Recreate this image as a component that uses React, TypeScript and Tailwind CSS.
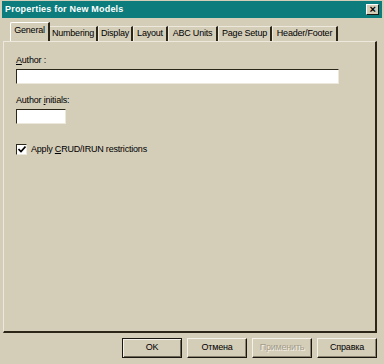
import React from "react";

const font = "font-['Liberation_Sans',Arial,sans-serif]";

const tabs = [
  { label: "General", w: "w-[40px]" },
  { label: "Numbering", w: "w-[49px]" },
  { label: "Display", w: "w-[35px]" },
  { label: "Layout", w: "w-[35px]" },
  { label: "ABC Units", w: "w-[50px]" },
  { label: "Page Setup", w: "w-[54px]" },
  { label: "Header/Footer", w: "w-[66px]" },
];

const Tab = ({ label, w, active }: { label: string; w: string; active?: boolean }) => (
  <div
    className={
      `${w} whitespace-nowrap flex items-center justify-center ` +
      (active
        ? "h-[19px] pb-[2px] border-t border-l border-t-white border-l-white border-r-2 border-r-[#2b2618] rounded-tl-[2px] -mr-[1px] relative z-10 bg-[#d4cdb8]"
        : "h-[15px] mt-[4px] border-t border-l border-t-[#ece8dc] border-l-[#ece8dc] border-r-2 border-r-[#2b2618]")
    }
  >
    {label}
  </div>
);

const Button = ({ label, def, disabled }: { label: string; def?: boolean; disabled?: boolean }) => (
  <button
    className={
      "w-[60px] h-[20px] flex items-center justify-center border " +
      (def
        ? "border-[#1a1710] shadow-[inset_1px_1px_0_#f4f1e8,inset_-1px_-1px_0_#6b6656]"
        : "border-t-[#f4f1e8] border-l-[#f4f1e8] border-r-[#1a1710] border-b-[#1a1710] shadow-[inset_-1px_-1px_0_#8a8470]") +
      (disabled ? " text-[#a29c88] [text-shadow:1px_1px_0_#f4f1e8]" : " text-black")
    }
  >
    {label}
  </button>
);

export default function App() {
  return (
    <div className={`w-[384px] h-[364px] bg-[#d4cdb8] flex flex-col text-[9px] tracking-[-0.2px] text-black ${font}`}>
      {/* Title bar */}
      <div className="mx-[2px] mt-[1px] h-[17px] bg-[#0c7c7c] flex items-center justify-between pl-[3px] pr-[3px]">
        <span className="text-white font-bold text-[9px] tracking-[0.2px]">Properties for New Models</span>
        <div className="w-[13px] h-[11px] bg-[#d4cdb8] border border-t-white border-l-white border-r-[#1a1710] border-b-[#1a1710] flex items-center justify-center text-[11px] font-bold leading-none">
          ×
        </div>
      </div>

      {/* Tabs */}
      <div className="flex pl-[10px] mt-[4px] h-[19px] items-start">
        {tabs.map((t, i) => (
          <Tab key={t.label} label={t.label} w={t.w} active={i === 0} />
        ))}
      </div>

      {/* Panel */}
      <div className="ml-[3px] w-[374px] h-[292px] border-t border-l border-t-[#ece8dc] border-l-[#ece8dc] border-r-2 border-b-2 border-r-[#2b2618] border-b-[#2b2618] px-[12px] pt-[12px]">
        <div className="leading-[12px]">
          <span className="underline">A</span>uthor :
        </div>
        <div className="mt-[3px] w-[323px] h-[15px] bg-white border border-t-[#2b2618] border-l-[#2b2618] border-r-[#ece8dc] border-b-[#ece8dc]" />

        <div className="mt-[10px] leading-[12px]">
          Author <span className="underline">i</span>nitials:
        </div>
        <div className="mt-[3px] w-[50px] h-[15px] bg-white border border-t-[#2b2618] border-l-[#2b2618] border-r-[#ece8dc] border-b-[#ece8dc]" />

        <div className="mt-[19px] flex items-center gap-[4px]">
          <div className="w-[11px] h-[11px] bg-white border border-t-[#2b2618] border-l-[#2b2618] border-r-[#ece8dc] border-b-[#ece8dc] flex items-center justify-center">
            <svg width="8" height="7" viewBox="0 0 8 7">
              <path d="M0.5 3 L3 5.5 L7.5 0.5" fill="none" stroke="black" strokeWidth="1.6" />
            </svg>
          </div>
          <span>
            Apply <span className="underline">C</span>RUD/IRUN restrictions
          </span>
        </div>
      </div>

      {/* Buttons */}
      <div className="flex justify-end gap-[5px] pr-[7px] mt-[5px]">
        <Button label="OK" def />
        <Button label="Отмена" />
        <Button label="Применить" disabled />
        <Button label="Справка" />
      </div>
    </div>
  );
}
